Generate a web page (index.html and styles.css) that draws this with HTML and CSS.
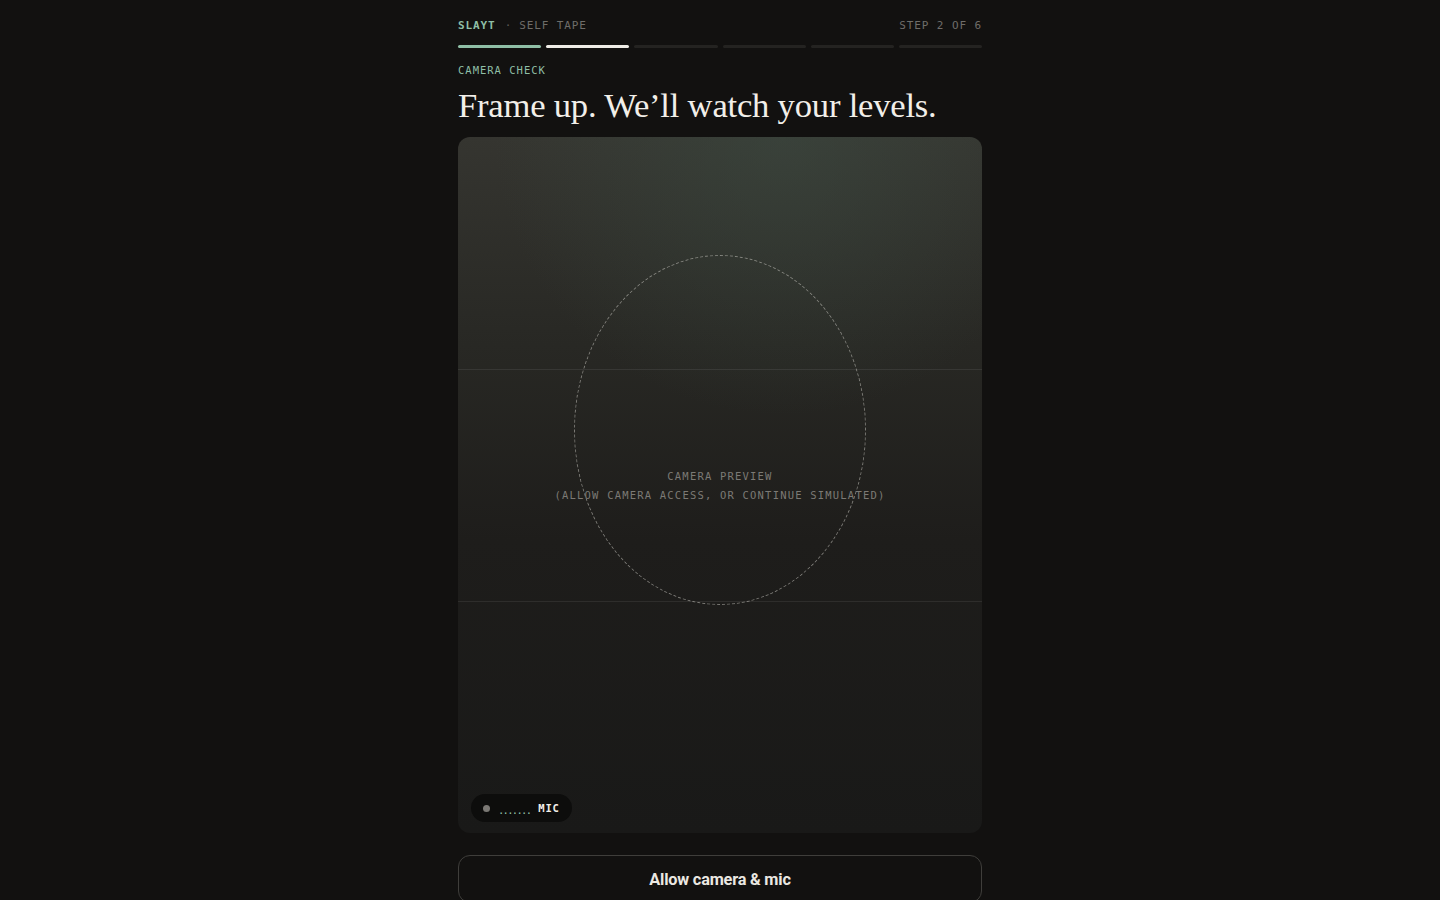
FILE: index.html
```html
<!DOCTYPE html>
<html>
<head>
<meta charset="utf-8">
<link rel="stylesheet" href="styles.css">
</head>
<body>
<main class="page">
  <header class="top">
    <div class="brand"><span class="brand-name">SLAYT</span><span class="brand-sep">·</span><span class="brand-sub">SELF TAPE</span></div>
    <div class="step">STEP 2 OF 6</div>
  </header>
  <div class="progress">
    <span class="seg done"></span>
    <span class="seg current"></span>
    <span class="seg"></span>
    <span class="seg"></span>
    <span class="seg"></span>
    <span class="seg"></span>
  </div>
  <div class="eyebrow">CAMERA CHECK</div>
  <h1 class="title">Frame up. We’ll watch your levels.</h1>
  <section class="preview">
    <div class="third third-1"></div>
    <div class="third third-2"></div>
    <div class="oval"></div>
    <div class="preview-text">CAMERA PREVIEW<br>(ALLOW CAMERA ACCESS, OR CONTINUE SIMULATED)</div>
    <div class="mic"><span class="mic-dot"></span><span class="mic-level">.......</span><span class="mic-label">MIC</span></div>
  </section>
  <button class="allow">Allow camera &amp; mic</button>
</main>
</body>
</html>
```
FILE: styles.css
```css
html, body {
  margin: 0;
  padding: 0;
  background: #121110;
  height: 100%;
  overflow: hidden;
}
.page {
  width: 524px;
  margin: 0 auto;
  padding-top: 19px;
  font-family: "DejaVu Sans Mono", "Liberation Mono", monospace;
}
.top {
  display: flex;
  justify-content: space-between;
  align-items: center;
  font-size: 11px;
  letter-spacing: 0.9px;
  line-height: 14px;
  color: #6f6d69;
}
.brand-name {
  color: #8fbfa6;
  font-weight: bold;
}
.brand-sep {
  margin: 0 7px 0 9px;
  color: #5b5a57;
}
.progress {
  display: flex;
  gap: 5px;
  margin-top: 12px;
}
.seg {
  flex: 1;
  height: 3px;
  border-radius: 2px;
  background: #242321;
}
.seg.done { background: #8fbfa6; }
.seg.current { background: #efece6; }
.eyebrow {
  margin-top: 15px;
  font-size: 10.5px;
  letter-spacing: 1px;
  line-height: 14px;
  color: #8fbfa6;
}
.title {
  margin: 8px 0 0;
  font-family: "Liberation Serif", "DejaVu Serif", serif;
  font-weight: normal;
  font-size: 34.6px;
  line-height: 40px;
  color: #f2efe9;
  letter-spacing: -0.2px;
}
.preview {
  position: relative;
  margin-top: 12px;
  height: 696px;
  border-radius: 12px;
  overflow: hidden;
  background:
    radial-gradient(ellipse 55% 40% at 62% 0%, rgba(62, 78, 68, 0.5), rgba(60, 64, 55, 0) 100%),
    linear-gradient(180deg, #353530 0%, #282824 30%, #1e1d1b 58%, #191918 100%);
  display: flex;
  flex-direction: column;
  justify-content: center;
  align-items: center;
}
.third {
  position: absolute;
  left: 0;
  right: 0;
  height: 1px;
  background: rgba(255, 255, 255, 0.08);
}
.third-1 { top: 232px; }
.third-2 { top: 464px; }
.oval {
  position: absolute;
  left: 116px;
  top: 118px;
  width: 290px;
  height: 348px;
  border: 1px dashed rgba(200, 198, 192, 0.55);
  border-radius: 50%;
}
.preview-text {
  position: relative;
  margin-top: 2px;
  text-align: center;
  font-size: 10.5px;
  letter-spacing: 1.2px;
  line-height: 19px;
  color: #7c7a75;
}
.mic {
  position: absolute;
  left: 13px;
  bottom: 11px;
  height: 28px;
  padding: 0 12px 0 12px;
  border-radius: 14px;
  background: #0d0d0c;
  display: flex;
  align-items: center;
  gap: 6px;
  font-size: 10.5px;
}
.mic-dot {
  width: 7px;
  height: 7px;
  border-radius: 50%;
  background: #7a7874;
  margin-right: 2px;
}
.mic-level {
  color: #8fbfa6;
  letter-spacing: -1.7px;
  margin-right: 2px;
  position: relative;
  top: 2px;
}
.mic-label {
  color: #f2efe9;
  font-weight: bold;
  letter-spacing: 0.8px;
}
.allow {
  display: block;
  width: 100%;
  margin-top: 22px;
  height: 48px;
  border: 1px solid #3f3e3b;
  border-radius: 12px;
  background: transparent;
  color: #ebe8e2;
  font-family: Roboto, "Liberation Sans", sans-serif;
  font-weight: bold;
  font-size: 16.3px;
  letter-spacing: -0.2px;
}
```
